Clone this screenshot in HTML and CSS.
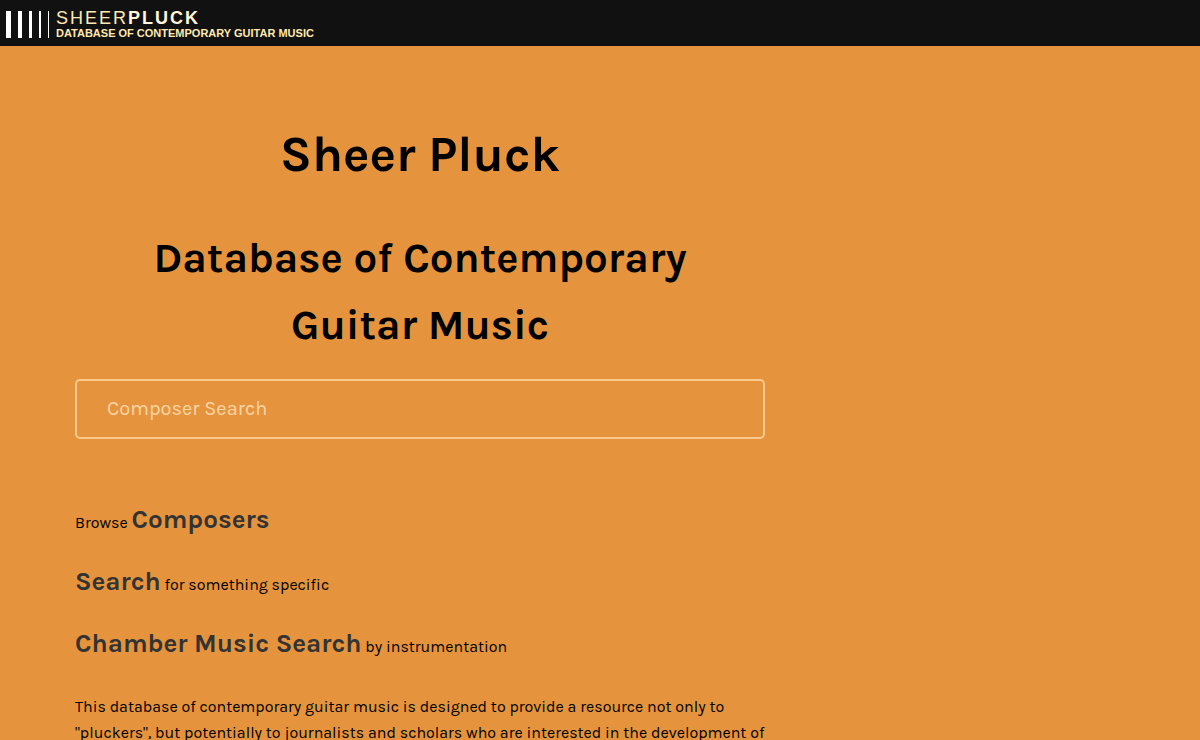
FILE: index.html
```html
<!DOCTYPE html>
<html lang="en">
<head>
    <meta charset="UTF-8">
    <meta name="viewport" content="width=device-width, initial-scale=1.0">
    <title>Sheer Pluck - Database of Contemporary Guitar Music</title>
    <link rel="stylesheet" href="styles.css">
</head>
<body>
    <header class="topbar">
        <a class="logo" href="#">
            <svg class="logo-strings" width="43" height="27" viewBox="0 0 43 27" fill="#fff" aria-hidden="true">
                <rect x="0" width="5" height="27"/>
                <rect x="12" width="4" height="27"/>
                <rect x="23" width="3" height="27"/>
                <rect x="33" width="2" height="27"/>
                <rect x="42" width="1" height="27"/>
            </svg>
            <span class="logo-text">
                <span class="logo-name">SHEER<b>PLUCK</b></span>
                <span class="logo-tagline">DATABASE OF CONTEMPORARY GUITAR MUSIC</span>
            </span>
        </a>
    </header>

    <main class="content">
        <h1>Sheer Pluck</h1>
        <h2>Database of Contemporary Guitar Music</h2>

        <form class="search-form">
            <input type="text" id="composer" name="composer" placeholder="Composer Search" aria-label="Composer Search">
        </form>

        <p>Browse <a href="#">Composers</a></p>
        <p><a href="#">Search</a> for something specific</p>
        <p><a href="#">Chamber Music Search</a> by instrumentation</p>

        <p class="intro">This database of contemporary guitar music is designed to provide a resource not only to "pluckers", but potentially to journalists and scholars who are interested in the development of</p>
    </main>
</body>
</html>
```
FILE: styles.css
```css
* {
    box-sizing: border-box;
}
body {
    margin: 0;
    background-color: #e5943d;
    color: #000;
    font-family: Karla, Roboto, sans-serif;
    font-size: 16px;
    line-height: 26px;
}
.topbar {
    background-color: #111;
    padding: 10px 6px 6px;
}
.logo {
    display: flex;
    align-items: flex-start;
    gap: 7px;
    color: #ffe9b0;
    text-decoration: none;
    font-family: Helvetica, "Liberation Sans", Arial, sans-serif;
}
.logo-strings {
    margin-top: 1px;
}
.logo-text {
    display: flex;
    flex-direction: column;
}
.logo-name {
    font-size: 18px;
    line-height: 16px;
    letter-spacing: 2px;
}
.logo-name b {
    color: #fff6dc;
}
.logo-tagline {
    font-size: 11px;
    line-height: 14px;
    font-weight: bold;
}
.content {
    max-width: 840px;
    padding: 69px 75px 0;
}
h1,
h2 {
    margin: 0;
    padding: 0 30px;
    text-align: center;
    font-weight: 700;
}
h1 {
    font-size: 50px;
    line-height: 80px;
    margin-bottom: 30px;
}
h2 {
    font-size: 42px;
    line-height: 67px;
    margin-bottom: 20px;
}
.search-form {
    margin-bottom: 60px;
}
.search-form input {
    display: block;
    width: 100%;
    height: 60px;
    padding: 0 30px 2px;
    border: 2px solid #fbc98d;
    border-radius: 5px;
    background: transparent;
    color: #fff;
    font-family: inherit;
    font-size: 20px;
}
.search-form input::placeholder {
    color: #fbd5a5;
    opacity: 1;
}
.content p {
    margin: 0 0 20px;
}
.content p a {
    color: #333;
    font-size: 26px;
    font-weight: 700;
    line-height: 42px;
    text-decoration: none;
}
.content .intro {
    margin-top: 29px;
}
```
